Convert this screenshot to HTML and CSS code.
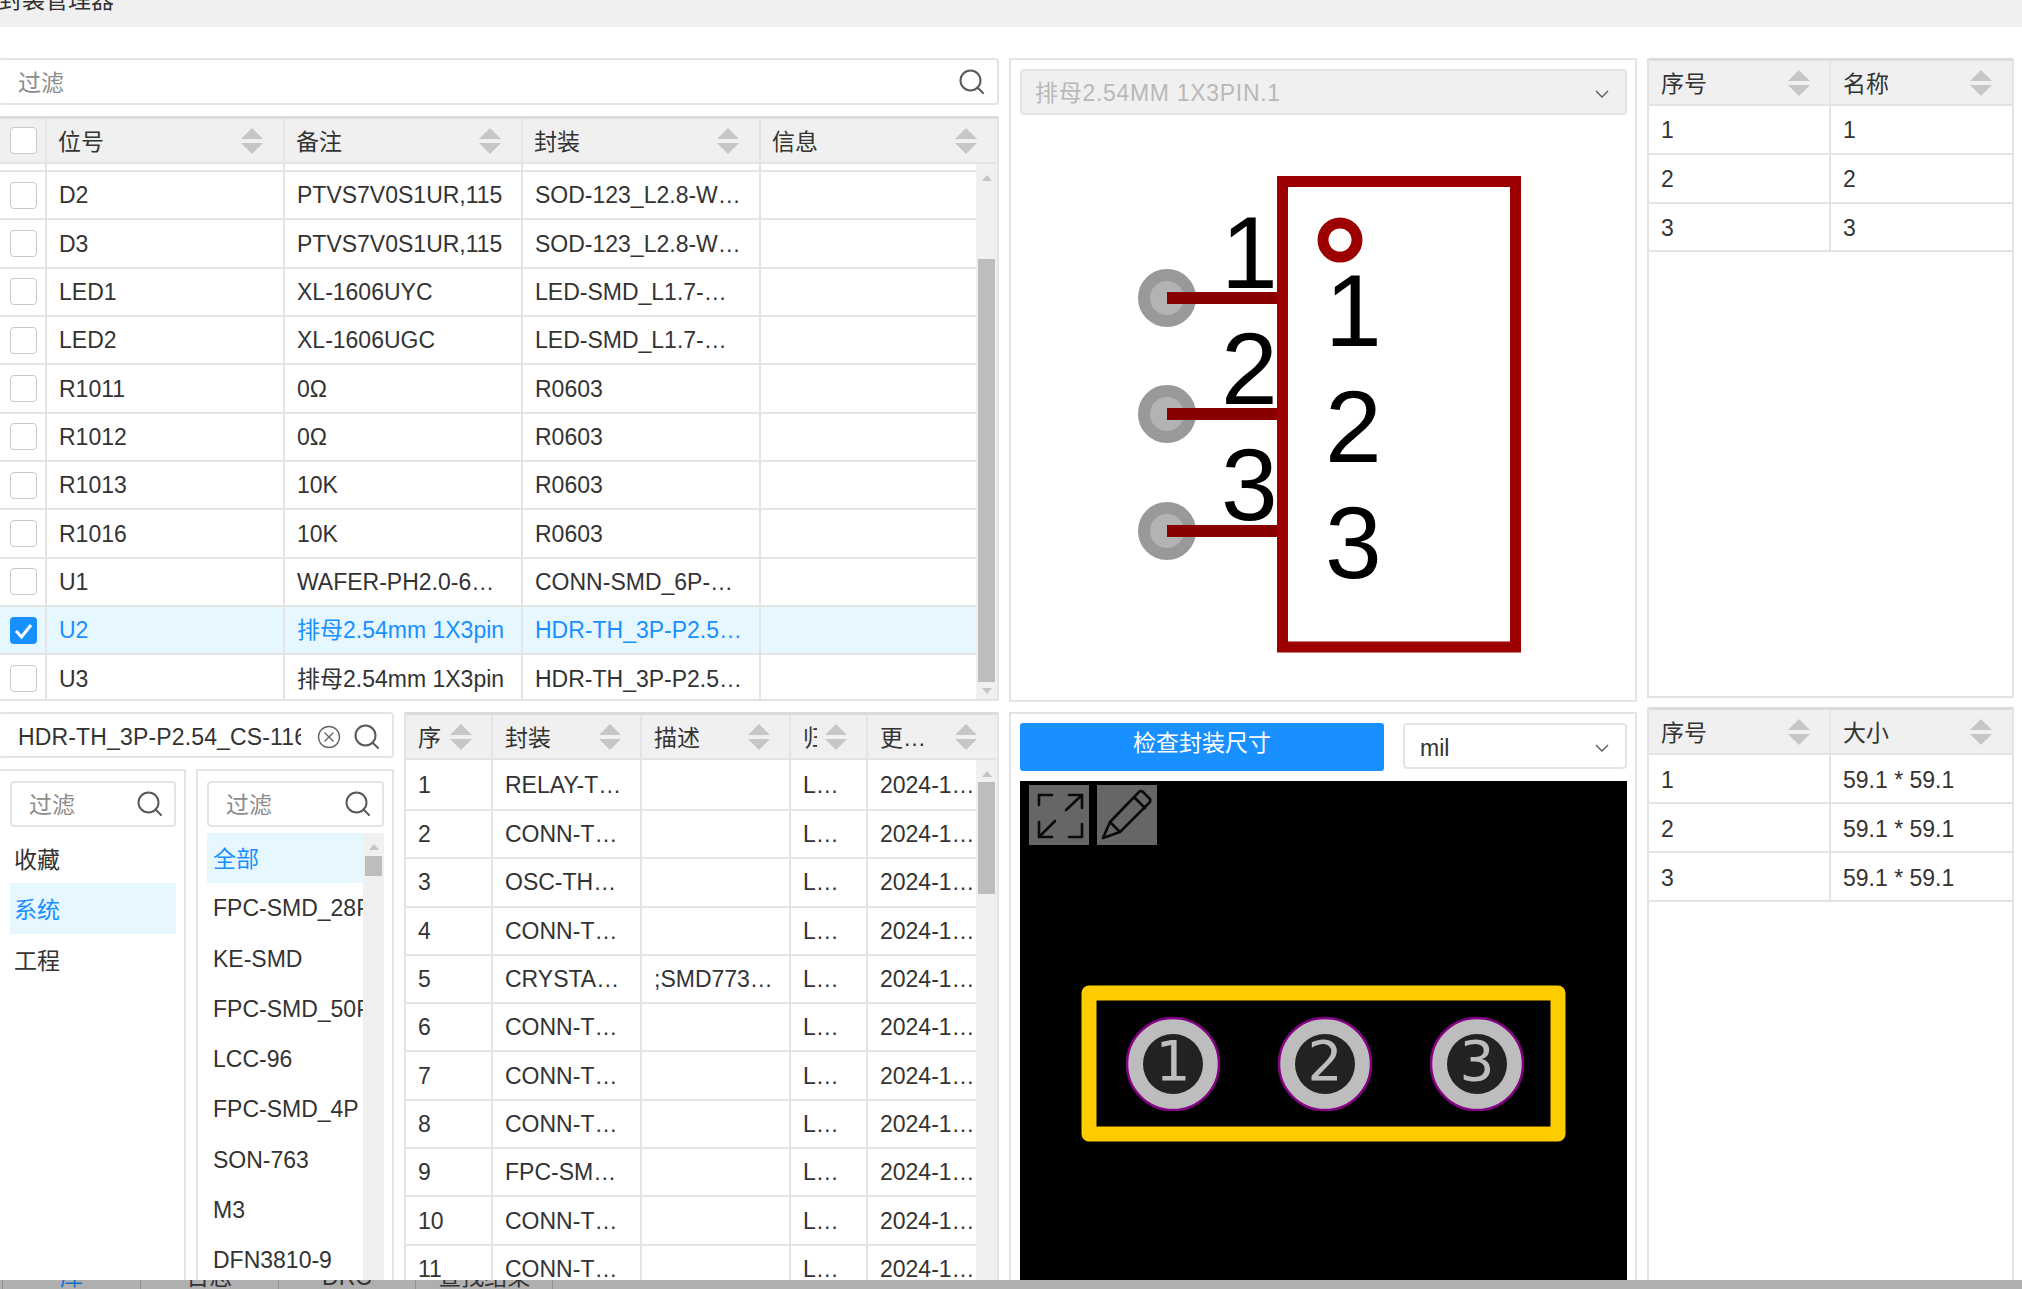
FILE: index.html
```html
<!DOCTYPE html>
<html>
<head>
  <meta charset="UTF-8"/>
  <title>封装管理器</title>
  <link rel="stylesheet" href="styles.css">
</head>
<body>
<div class="titlebar"><span>封装管理器</span></div>

<div class="main">
  <!-- left: device table, then library browser -->
  <div class="col-left">
    <div class="top-left">
      <div class="search search-wide">
        <span class="placeholder">过滤</span>
        <svg class="ico-search" viewBox="0 0 26 26"><circle cx="11.5" cy="11.5" r="10"/><path d="M18.5 18.5L24 24"/></svg>
      </div>
      <div class="table table-devices">
        <div class="thead grid-dev">
          <div class="th th-check"><i class="check"></i></div>
          <div class="th"><span>位号</span><i class="sort"></i></div>
          <div class="th"><span>备注</span><i class="sort"></i></div>
          <div class="th"><span>封装</span><i class="sort"></i></div>
          <div class="th th-last"><span>信息</span><i class="sort"></i></div>
        </div>
        <div class="tbody">
          <div class="rows">
            <div class="tr tr-cut grid-dev"><div class="td"></div><div class="td"></div><div class="td"></div><div class="td"></div><div class="td"></div></div>
            <div class="tr grid-dev"><div class="td td-check"><i class="check"></i></div><div class="td">D2</div><div class="td">PTVS7V0S1UR,115</div><div class="td">SOD-123_L2.8-W…</div><div class="td"></div></div>
            <div class="tr grid-dev"><div class="td td-check"><i class="check"></i></div><div class="td">D3</div><div class="td">PTVS7V0S1UR,115</div><div class="td">SOD-123_L2.8-W…</div><div class="td"></div></div>
            <div class="tr grid-dev"><div class="td td-check"><i class="check"></i></div><div class="td">LED1</div><div class="td">XL-1606UYC</div><div class="td">LED-SMD_L1.7-…</div><div class="td"></div></div>
            <div class="tr grid-dev"><div class="td td-check"><i class="check"></i></div><div class="td">LED2</div><div class="td">XL-1606UGC</div><div class="td">LED-SMD_L1.7-…</div><div class="td"></div></div>
            <div class="tr grid-dev"><div class="td td-check"><i class="check"></i></div><div class="td">R1011</div><div class="td">0Ω</div><div class="td">R0603</div><div class="td"></div></div>
            <div class="tr grid-dev"><div class="td td-check"><i class="check"></i></div><div class="td">R1012</div><div class="td">0Ω</div><div class="td">R0603</div><div class="td"></div></div>
            <div class="tr grid-dev"><div class="td td-check"><i class="check"></i></div><div class="td">R1013</div><div class="td">10K</div><div class="td">R0603</div><div class="td"></div></div>
            <div class="tr grid-dev"><div class="td td-check"><i class="check"></i></div><div class="td">R1016</div><div class="td">10K</div><div class="td">R0603</div><div class="td"></div></div>
            <div class="tr grid-dev"><div class="td td-check"><i class="check"></i></div><div class="td">U1</div><div class="td">WAFER-PH2.0-6…</div><div class="td">CONN-SMD_6P-…</div><div class="td"></div></div>
            <div class="tr tr-on grid-dev"><div class="td td-check"><i class="check check-on"><svg viewBox="0 0 27 27"><path d="M6 14l5.5 6L21 8"/></svg></i></div><div class="td">U2</div><div class="td">排母2.54mm 1X3pin</div><div class="td">HDR-TH_3P-P2.5…</div><div class="td"></div></div>
            <div class="tr grid-dev"><div class="td td-check"><i class="check"></i></div><div class="td">U3</div><div class="td">排母2.54mm 1X3pin</div><div class="td">HDR-TH_3P-P2.5…</div><div class="td"></div></div>
          </div>
          <div class="sbar sbar-dev"><i class="sb-up"></i><i class="sb-thumb"></i><i class="sb-down"></i></div>
        </div>
      </div>
    </div>

    <div class="bottom-left">
      <div class="browser">
        <div class="search search-wide">
          <span class="search-value">HDR-TH_3P-P2.54_CS-116</span>
          <svg class="ico-clear" viewBox="0 0 24 24"><circle cx="12" cy="12" r="10.5"/><path d="M7.5 7.5l9 9M16.5 7.5l-9 9"/></svg>
          <svg class="ico-search" viewBox="0 0 26 26"><circle cx="11.5" cy="11.5" r="10"/><path d="M18.5 18.5L24 24"/></svg>
        </div>
        <div class="lists">
          <div class="pane pane-cat">
            <div class="search search-small">
              <span class="placeholder">过滤</span>
              <svg class="ico-search" viewBox="0 0 26 26"><circle cx="11.5" cy="11.5" r="10"/><path d="M18.5 18.5L24 24"/></svg>
            </div>
            <div class="cat-list">
              <div class="item item-zh">收藏</div>
              <div class="item item-zh item-on">系统</div>
              <div class="item item-zh">工程</div>
            </div>
          </div>
          <div class="pane pane-group">
            <div class="search search-small">
              <span class="placeholder">过滤</span>
              <svg class="ico-search" viewBox="0 0 26 26"><circle cx="11.5" cy="11.5" r="10"/><path d="M18.5 18.5L24 24"/></svg>
            </div>
            <div class="group-list">
              <div class="group-items">
                <div class="item item-zh item-on">全部</div>
                <div class="item">FPC-SMD_28P-P0.50</div>
                <div class="item">KE-SMD</div>
                <div class="item">FPC-SMD_50P-P0.50</div>
                <div class="item">LCC-96</div>
                <div class="item">FPC-SMD_4P</div>
                <div class="item">SON-763</div>
                <div class="item">M3</div>
                <div class="item">DFN3810-9</div>
              </div>
              <div class="sbar sbar-group"><i class="sb-up"></i><i class="sb-thumb"></i></div>
            </div>
          </div>
        </div>
      </div>

      <div class="table table-lib">
        <div class="thead grid-lib">
          <div class="th"><span>序</span><i class="sort"></i></div>
          <div class="th"><span>封装</span><i class="sort"></i></div>
          <div class="th"><span>描述</span><i class="sort"></i></div>
          <div class="th"><span class="th-clip">归属</span><i class="sort"></i></div>
          <div class="th th-last"><span>更…</span><i class="sort"></i></div>
        </div>
        <div class="tbody">
          <div class="rows">
            <div class="tr tr-first grid-lib"><div class="td">1</div><div class="td">RELAY-T…</div><div class="td"></div><div class="td">L…</div><div class="td">2024-1…</div></div>
            <div class="tr grid-lib"><div class="td">2</div><div class="td">CONN-T…</div><div class="td"></div><div class="td">L…</div><div class="td">2024-1…</div></div>
            <div class="tr grid-lib"><div class="td">3</div><div class="td">OSC-TH…</div><div class="td"></div><div class="td">L…</div><div class="td">2024-1…</div></div>
            <div class="tr grid-lib"><div class="td">4</div><div class="td">CONN-T…</div><div class="td"></div><div class="td">L…</div><div class="td">2024-1…</div></div>
            <div class="tr grid-lib"><div class="td">5</div><div class="td">CRYSTA…</div><div class="td">;SMD773…</div><div class="td">L…</div><div class="td">2024-1…</div></div>
            <div class="tr grid-lib"><div class="td">6</div><div class="td">CONN-T…</div><div class="td"></div><div class="td">L…</div><div class="td">2024-1…</div></div>
            <div class="tr grid-lib"><div class="td">7</div><div class="td">CONN-T…</div><div class="td"></div><div class="td">L…</div><div class="td">2024-1…</div></div>
            <div class="tr grid-lib"><div class="td">8</div><div class="td">CONN-T…</div><div class="td"></div><div class="td">L…</div><div class="td">2024-1…</div></div>
            <div class="tr grid-lib"><div class="td">9</div><div class="td">FPC-SM…</div><div class="td"></div><div class="td">L…</div><div class="td">2024-1…</div></div>
            <div class="tr grid-lib"><div class="td">10</div><div class="td">CONN-T…</div><div class="td"></div><div class="td">L…</div><div class="td">2024-1…</div></div>
            <div class="tr grid-lib"><div class="td">11</div><div class="td">CONN-T…</div><div class="td"></div><div class="td">L…</div><div class="td">2024-1…</div></div>
          </div>
          <div class="sbar sbar-lib"><i class="sb-up"></i><i class="sb-thumb"></i></div>
        </div>
      </div>
    </div>
  </div>

  <!-- middle: symbol and footprint previews -->
  <div class="col-preview">
    <div class="panel panel-symbol">
      <div class="select select-off">
        <span>排母2.54MM 1X3PIN.1</span>
        <svg class="chevron" viewBox="0 0 14 8"><path d="M1 1l6 6 6-6"/></svg>
      </div>
      <svg class="symbol" viewBox="1011 125 624 575" width="624" height="575">
        <text x="1221" y="288">1</text>
        <text x="1221" y="404">2</text>
        <text x="1221" y="520">3</text>
        <text x="1325" y="346">1</text>
        <text x="1325" y="462">2</text>
        <text x="1325" y="578">3</text>
        <g class="pin-pad">
          <circle cx="1167" cy="298" r="23"/>
          <circle cx="1167" cy="414" r="23"/>
          <circle cx="1167" cy="531" r="23"/>
        </g>
        <g class="pin-line">
          <path d="M1167 298H1280M1167 414H1280M1167 531H1280"/>
        </g>
        <rect class="sym-body" x="1282.5" y="181.5" width="233" height="465.5"/>
        <circle class="sym-dot" cx="1340" cy="240" r="17"/>
      </svg>
    </div>
    <div class="panel panel-foot">
      <div class="foot-bar">
        <div class="btn-check">检查封装尺寸</div>
        <div class="select select-unit">
          <span>mil</span>
          <svg class="chevron" viewBox="0 0 14 8"><path d="M1 1l6 6 6-6"/></svg>
        </div>
      </div>
      <div class="canvas">
        <svg class="footprint" viewBox="1020 781 607 499" width="607" height="499">
          <rect class="fp-outline" x="1089" y="993" width="469" height="141"/>
          <g class="fp-pad">
            <circle cx="1173" cy="1064" r="46"/>
            <circle cx="1325" cy="1064" r="46"/>
            <circle cx="1477" cy="1064" r="46"/>
          </g>
          <g class="fp-hole">
            <circle cx="1173" cy="1064" r="30"/>
            <circle cx="1325" cy="1064" r="30"/>
            <circle cx="1477" cy="1064" r="30"/>
          </g>
          <text x="1173" y="1080">1</text>
          <text x="1325" y="1080">2</text>
          <text x="1477" y="1080">3</text>
        </svg>
        <div class="canvas-tools">
          <div class="tool"><svg viewBox="0 0 60 60"><path d="M10 20V10H23M40 10H53V23M53 10L37 25M10 37V52H23M10 52L26 36M40 52H53V39"/></svg></div>
          <div class="tool"><svg viewBox="0 0 60 60"><path d="M6 53L13 37L42 7Q44 5 46 7L53 14Q54 16 52 18L23 47ZM13 37L23 47M37 12L48 23"/></svg></div>
        </div>
      </div>
    </div>
  </div>

  <!-- right: pin and pad tables -->
  <div class="col-info">
    <div class="table table-info table-pins">
      <div class="thead grid-info">
        <div class="th"><span>序号</span><i class="sort"></i></div>
        <div class="th th-last"><span>名称</span><i class="sort"></i></div>
      </div>
      <div class="tr grid-info"><div class="td">1</div><div class="td">1</div></div>
      <div class="tr grid-info"><div class="td">2</div><div class="td">2</div></div>
      <div class="tr grid-info"><div class="td">3</div><div class="td">3</div></div>
    </div>
    <div class="table table-info table-pads">
      <div class="thead grid-info">
        <div class="th"><span>序号</span><i class="sort"></i></div>
        <div class="th th-last"><span>大小</span><i class="sort"></i></div>
      </div>
      <div class="tr grid-info"><div class="td">1</div><div class="td">59.1 * 59.1</div></div>
      <div class="tr grid-info"><div class="td">2</div><div class="td">59.1 * 59.1</div></div>
      <div class="tr grid-info"><div class="td">3</div><div class="td">59.1 * 59.1</div></div>
    </div>
  </div>
</div>

<div class="tabs">
  <div class="tab tab-on">库</div>
  <div class="tab">日志</div>
  <div class="tab">DRC</div>
  <div class="tab">查找结果</div>
</div>
</body>
</html>
```

FILE: styles.css
```css
:root{
  --line: #e4e4e4;
  --text: #333;
  --blue: #1890ff;
}
html, body{
  height: 100%;
}
body{
  margin: 0;
  display: flex;
  flex-direction: column;
  overflow: hidden;
  color: var(--text);
  background: #fff;
  font-family: "Liberation Sans", "Noto Sans CJK SC", sans-serif;
  font-size: 23px;
  line-height: 30px;
}
i{
  display: block;
}

.titlebar{
  flex: none;
  height: 27px;
  overflow: hidden;
  background: #f0f0f0;
  white-space: nowrap;
}
.titlebar span{
  display: block;
  margin: -15px 0 0 -1px;
}

.main{
  flex: 1;
  min-height: 0;
  display: flex;
  padding-top: 31px;
  overflow: hidden;
}
.col-left{
  flex: none;
  width: 999px;
  display: flex;
  flex-direction: column;
}
.col-preview{
  flex: none;
  width: 628px;
  margin-left: 10px;
  display: flex;
  flex-direction: column;
}
.col-info{
  flex: none;
  width: 367px;
  margin-left: 10px;
  display: flex;
  flex-direction: column;
}

/* search boxes */
.search{
  box-sizing: border-box;
  display: flex;
  align-items: center;
  border: 2px solid var(--line);
  border-radius: 4px;
  white-space: nowrap;
}
.search-wide{
  height: 47px;
  margin-left: -2px;
  padding: 0 12px 0 18px;
}
.browser .search-wide{
  height: 46px;
  flex: none;
}
.search-small{
  height: 46px;
  padding: 0 11px 0 17px;
}
.placeholder{
  padding-top: 2px;
  color: #8c8c8c;
}
.search-value{
  flex: 1;
  min-width: 0;
  overflow: hidden;
  padding-top: 3px;
  letter-spacing: 0.15px;
}
.browser .search-wide svg{
  margin-top: 3px;
}
.ico-search{
  flex: none;
  width: 26px;
  height: 26px;
  margin-left: auto;
  fill: none;
  stroke: #595959;
  stroke-width: 2;
  stroke-linecap: round;
}
.ico-clear{
  flex: none;
  width: 24px;
  height: 24px;
  margin: 0 13px 0 16px;
  fill: none;
  stroke: #666;
  stroke-width: 1.4;
}

/* tables */
.top-left{
  flex: none;
  height: 644px;
  display: flex;
  flex-direction: column;
}
.table-devices{
  flex: none;
  margin-top: 11px;
  height: 585px;
  border-bottom: 2px solid var(--line);
  box-sizing: border-box;
}
.table{
  border-right: 2px solid var(--line);
  overflow: hidden;
}
.thead{
  box-sizing: border-box;
  height: 48px;
  border-top: 3px solid #dcdcdc;
  border-bottom: 2px solid var(--line);
  background: #f0f0f0;
}
.grid-dev{
  display: grid;
  grid-template-columns: 47px 238px 238px 238px 1fr;
}
.grid-lib{
  display: grid;
  grid-template-columns: 87px 149px 149px 77px 1fr;
}
.grid-info{
  display: grid;
  grid-template-columns: 182px 1fr;
}
.th{
  box-sizing: border-box;
  min-width: 0;
  display: flex;
  align-items: center;
  padding: 0 19px 0 12px;
  border-right: 2px solid var(--line);
  white-space: nowrap;
}
.th span{
  padding-top: 2px;
}
.table-devices .th{
  padding: 0 20px 0 11px;
}
.th-last{
  border-right: 0;
  padding-right: 20px;
}
.table-devices .th-check{
  padding: 0 0 0 10px;
}
.th-clip{
  display: block;
  width: 14px;
  overflow: hidden;
}
.sort{
  flex: none;
  margin-left: auto;
  width: 22px;
  height: 26px;
  position: relative;
}
.sort::before, .sort::after{
  content: "";
  position: absolute;
  left: 0;
  border-left: 11px solid transparent;
  border-right: 11px solid transparent;
}
.sort::before{
  top: 0;
  border-bottom: 11px solid #c6c6c6;
}
.sort::after{
  bottom: 0;
  border-top: 11px solid #c6c6c6;
}
.check{
  box-sizing: border-box;
  width: 27px;
  height: 27px;
  border: 1.5px solid #c9c9c9;
  border-radius: 4px;
  background: #fff;
}
.check-on{
  border: 0;
  background: var(--blue);
}
.check-on svg{
  display: block;
  fill: none;
  stroke: #fff;
  stroke-width: 3;
}
.tbody{
  display: flex;
  align-items: stretch;
  height: calc(100% - 48px);
}
.rows{
  flex: 1;
  min-width: 0;
  overflow: hidden;
}
.tr{
  box-sizing: border-box;
  height: 48.35px;
  border-bottom: 2px solid var(--line);
}
.tr-cut{
  height: 8px;
}
.table-lib .tr{
  height: 48.3px;
}
.table-lib .tr-first{
  height: 51px;
}
.tr-on{
  background: #e6f7ff;
  color: var(--blue);
}
.td{
  box-sizing: border-box;
  min-width: 0;
  display: flex;
  align-items: center;
  padding-left: 12px;
  border-right: 2px solid var(--line);
  white-space: nowrap;
  overflow: hidden;
}
.td:last-child{
  border-right: 0;
}
.td-check{
  padding-left: 10px;
}

/* scrollbars */
.sbar{
  flex: none;
  width: 21px;
  display: flex;
  flex-direction: column;
  align-items: center;
  background: #f0f0f0;
}
.sb-up, .sb-down{
  flex: none;
  border-left: 5px solid transparent;
  border-right: 5px solid transparent;
}
.sb-up{
  margin-top: 11px;
  border-bottom: 6px solid #c4c4c4;
}
.sb-down{
  margin-top: 6px;
  border-top: 6px solid #c4c4c4;
}
.sb-thumb{
  flex: none;
  width: 17px;
  background: #bdbdbd;
}
.sbar-dev .sb-thumb{
  margin-top: 78px;
  height: 423px;
}
.sbar-lib .sb-thumb{
  margin-top: 5px;
  height: 112px;
}
.sbar-group .sb-thumb{
  margin-top: 6px;
  height: 20px;
}

/* library browser */
.bottom-left{
  flex: 1;
  min-height: 0;
  display: flex;
  margin-top: 10px;
}
.browser{
  flex: none;
  width: 394px;
  display: flex;
  flex-direction: column;
}
.lists{
  flex: 1;
  min-height: 0;
  display: flex;
  gap: 10px;
  margin-top: 11px;
}
.pane{
  box-sizing: border-box;
  border: 2px solid var(--line);
  border-bottom: 0;
  padding-top: 10px;
  overflow: hidden;
}
.pane-cat{
  flex: none;
  width: 188px;
  margin-left: -2px;
  padding-left: 10px;
  padding-right: 8px;
}
.pane-group{
  flex: 1;
  padding-left: 9px;
  padding-right: 8px;
}
.item{
  height: 50.3px;
  line-height: 50px;
  white-space: nowrap;
  overflow: hidden;
}
.item-zh{
  line-height: 53px;
}
.cat-list .item-zh{
  line-height: 55px;
}
.item-on{
  background: #e6f7ff;
  color: var(--blue);
}
.cat-list{
  margin-top: 6px;
}
.cat-list .item{
  padding-left: 4px;
}
.group-list{
  display: flex;
  margin-top: 6px;
}
.group-items{
  flex: 1;
  min-width: 0;
}
.group-items .item{
  padding-left: 6px;
}
.table-lib{
  flex: 1;
  min-width: 0;
  margin-left: 10px;
  border-left: 2px solid var(--line);
}

/* previews */
.panel{
  box-sizing: border-box;
  border: 2px solid var(--line);
}
.panel-symbol{
  flex: none;
  height: 644px;
  padding-top: 9px;
}
.panel-foot{
  flex: 1;
  min-height: 0;
  margin-top: 10px;
  border-bottom: 0;
  padding: 9px 8px 0 9px;
  display: flex;
  flex-direction: column;
}
.select{
  box-sizing: border-box;
  height: 46px;
  display: flex;
  align-items: center;
  justify-content: space-between;
  padding: 0 16px 0 15px;
  border: 2px solid var(--line);
  border-radius: 4px;
}
.select-off{
  margin: 0 8px 0 9px;
  padding-left: 13px;
  background: #f0f0f0;
  color: #b8b8b8;
}
.select-off span{
  padding-top: 2px;
  letter-spacing: 0.7px;
}
.chevron{
  width: 14px;
  height: 8px;
  margin-top: 4px;
  fill: none;
  stroke: #595959;
  stroke-width: 1.4;
}
.symbol{
  display: block;
  margin-top: 10px;
}
.symbol text{
  font-size: 102px;
  fill: #000;
}
.pin-pad circle{
  fill: #b3b3b3;
  stroke: #999;
  stroke-width: 12;
}
.pin-line path{
  fill: none;
  stroke: #880000;
  stroke-width: 12;
}
.sym-body, .sym-dot{
  fill: none;
  stroke: #9c0000;
  stroke-width: 11;
}
.foot-bar{
  flex: none;
  height: 48px;
  display: flex;
  align-items: flex-start;
  gap: 19px;
}
.btn-check{
  flex: none;
  width: 364px;
  height: 48px;
  border-radius: 3px;
  background: var(--blue);
  color: #fff;
  text-align: center;
  line-height: 41px;
}
.select-unit{
  flex: 1;
}
.select-unit span{
  padding-top: 4px;
}
.canvas{
  flex: 1;
  min-height: 0;
  position: relative;
  margin-top: 10px;
  background: #000;
  overflow: hidden;
}
.footprint{
  display: block;
}
.fp-outline{
  fill: none;
  stroke: #ffcc00;
  stroke-width: 15;
  stroke-linejoin: round;
}
.fp-pad circle{
  fill: #bdbdbd;
  stroke: #850085;
  stroke-width: 2.5;
}
.fp-hole circle{
  fill: #222;
}
.footprint text{
  font-family: "DejaVu Sans", sans-serif;
  font-size: 55px;
  fill: #bdbdbd;
  text-anchor: middle;
}
.canvas-tools{
  position: absolute;
  top: 4px;
  left: 9px;
  display: flex;
  gap: 8px;
}
.tool{
  width: 60px;
  height: 60px;
  background: #666;
}
.tool svg{
  display: block;
  fill: none;
  stroke: #0a0a0a;
  stroke-width: 2.6;
  stroke-linecap: round;
  stroke-linejoin: round;
}

/* pin / pad tables */
.table-info{
  border-left: 2px solid var(--line);
}
.table-info .td{
  padding-top: 2px;
}
.table-pins{
  flex: none;
  height: 640px;
  box-sizing: border-box;
  border-bottom: 2px solid var(--line);
}
.table-pins .tr{
  height: 48.8px;
}
.table-pads{
  flex: 1;
  min-height: 0;
  margin-top: 9px;
}
.table-pads .tr{
  height: 49px;
}

/* bottom tabs, mostly cut off by the window edge */
.tabs{
  flex: none;
  height: 9px;
  display: flex;
  padding-left: 2px;
  overflow: hidden;
  background: #afafaf;
  white-space: nowrap;
}
.tab{
  box-sizing: border-box;
  width: 137.8px;
  height: 30px;
  margin-top: -18px;
  border-left: 1px solid #8f8f8f;
  text-align: center;
}
.tab:last-child{
  border-right: 1px solid #8f8f8f;
}
.tab-on{
  color: #1470d0;
}
```
